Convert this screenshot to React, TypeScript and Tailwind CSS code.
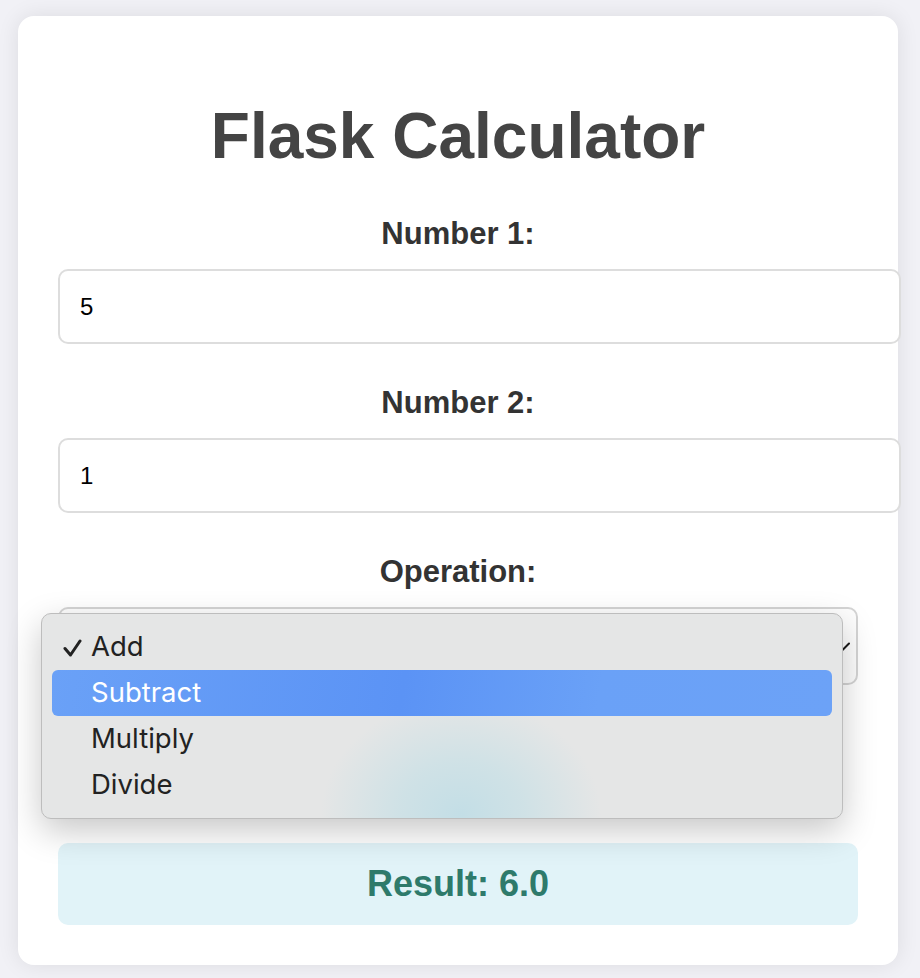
import React from "react";

function Field({ label, value }: { label: string; value: string }) {
  return (
    <div>
      <label className="mb-[17px] block text-center text-[31px] font-bold leading-[36px] text-[#333]">
        {label}
      </label>
      <input
        readOnly
        value={value}
        className="mb-[41px] block h-[75px] w-[843px] rounded-[10px] border-2 border-[#dddddd] bg-white px-[20px] text-[24px] text-black outline-none"
      />
    </div>
  );
}

export default function App() {
  const items = ["Add", "Subtract", "Multiply", "Divide"];
  return (
    <div className="min-h-screen bg-[#f1f1f6] pt-4 pb-[13px] font-['Liberation_Sans',Arial,sans-serif]">
      <div className="ml-[18px] w-[880px] rounded-[16px] bg-white p-10 shadow-[0_0_22px_rgba(0,0,0,0.09)]">
        <h1 className="my-[43px] text-center text-[64px] font-bold leading-[74px] text-[#444]">
          Flask Calculator
        </h1>
        <Field label="Number 1:" value="5" />
        <Field label="Number 2:" value="1" />
        <label className="mb-[17px] block text-center text-[31px] font-bold leading-[36px] text-[#333]">
          Operation:
        </label>
        <div className="relative h-[78px] w-[800px] rounded-[10px] border-2 border-[#d4d4d4] bg-[#fdfdfd]">
          <svg
            className="absolute right-[6px] top-[33px]"
            width="16"
            height="10"
            viewBox="0 0 16 10"
            fill="none"
          >
            <path d="M1 1.5 L8 8.5 L15 1.5" stroke="#1a1a1a" strokeWidth="2" strokeLinecap="round" />
          </svg>
          <div className="absolute left-[-19px] top-[4px] z-10 h-[206px] w-[802px] overflow-hidden rounded-[10px] border border-[#bdbdbd] bg-[#e5e6e6] shadow-[0_12px_34px_rgba(0,0,0,0.22)]">
            <div className="absolute inset-0 bg-[radial-gradient(ellipse_140px_115px_at_419px_200px,#c3dee6_0%,rgba(200,224,230,0.75)_45%,rgba(229,230,230,0)_100%)]" />
            <div className="relative px-[10px] py-[10px] font-['Inter',sans-serif] text-[27.5px] text-[#222]">
              {items.map((it, i) => (
                <div
                  key={it}
                  className={
                    i === 1
                      ? "relative flex h-[46px] items-center rounded-[6px] bg-[linear-gradient(100deg,#6aa1f7_0%,#5b93f5_45%,#6aa1f7_70%,#6ca2f7_100%)] pl-[39px] text-white"
                      : "relative flex h-[46px] items-center pl-[39px]"
                  }
                >
                  {i === 0 && (
                    <svg
                      className="absolute left-[11px] top-[15px]"
                      width="19"
                      height="18"
                      viewBox="0 0 19 18"
                      fill="none"
                    >
                      <path
                        d="M2 9.5 L7.5 16 L17 2"
                        stroke="#222"
                        strokeWidth="3"
                        strokeLinecap="round"
                        strokeLinejoin="round"
                      />
                    </svg>
                  )}
                  <span className="leading-none">{it}</span>
                </div>
              ))}
            </div>
          </div>
        </div>
        <div className="mt-[158px] flex h-[82px] w-[800px] items-center justify-center rounded-[10px] bg-[#e1f3f8] text-[36px] font-bold text-[#2e7a6b]">
          Result: 6.0
        </div>
      </div>
    </div>
  );
}
